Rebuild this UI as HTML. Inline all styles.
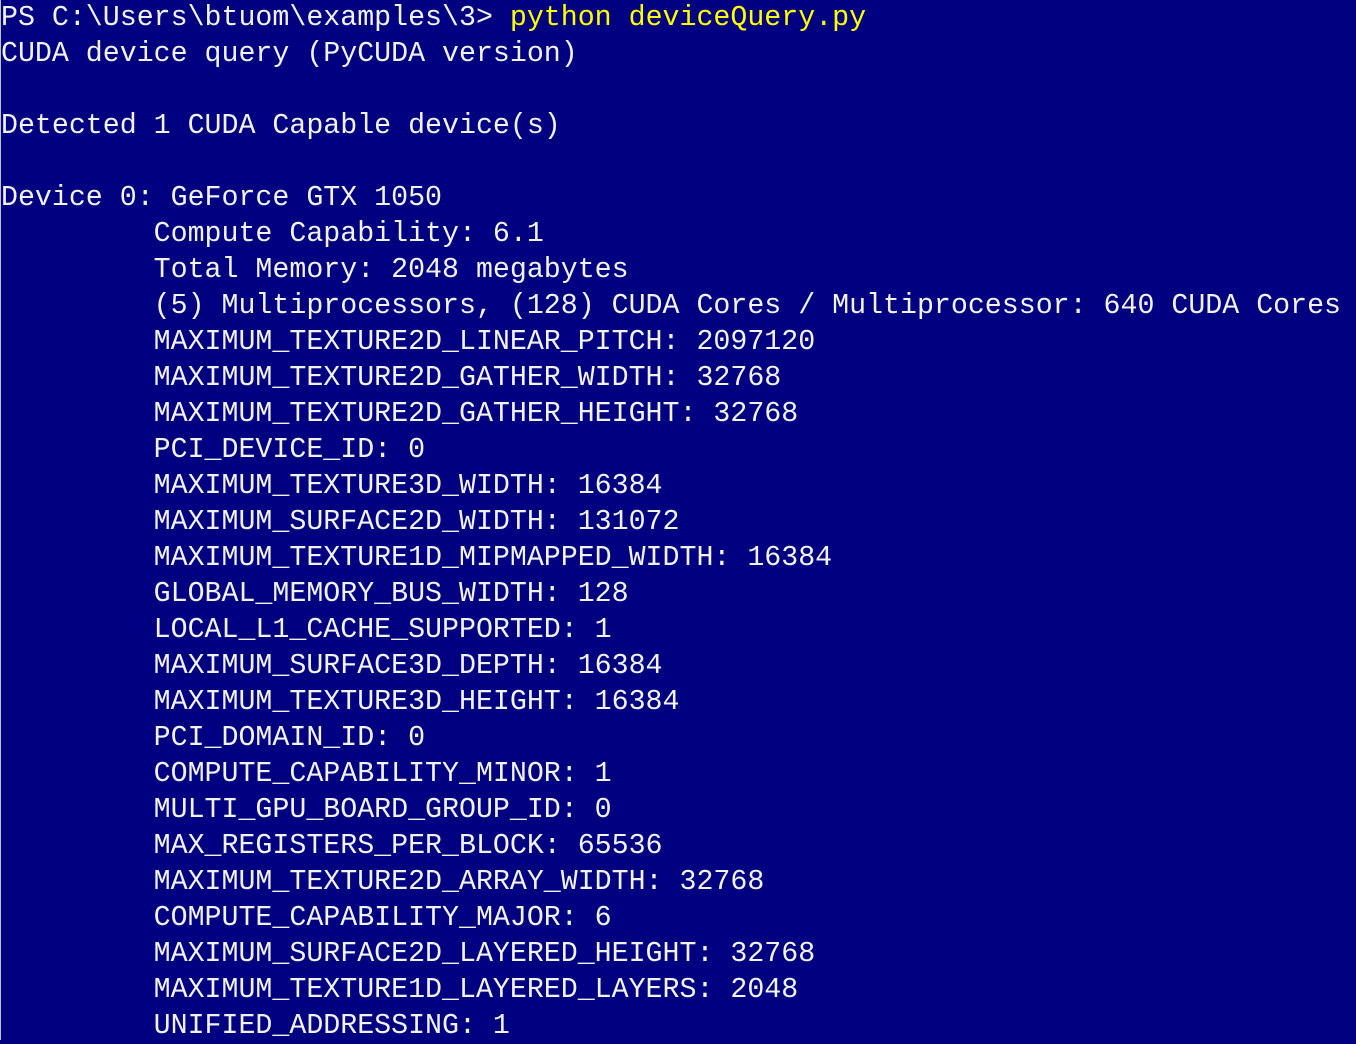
<!DOCTYPE html>
<html><head><meta charset="utf-8"><style>
html,body{margin:0;padding:0;}
body{width:1356px;height:1040px;background:#000080;overflow:hidden;position:relative;border-left:1px solid #c0c0c0;box-sizing:border-box;}
pre{position:absolute;left:0px;top:0px;margin:0;font-family:"Liberation Mono",monospace;font-size:28.28px;line-height:36px;color:#f2f2f2;white-space:pre;}
.y{color:#ffff00;}
</style></head><body><pre>PS C:\Users\btuom\examples\3&gt; <span class="y">python deviceQuery.py</span>
CUDA device query (PyCUDA version)

Detected 1 CUDA Capable device(s)

Device 0: GeForce GTX 1050
         Compute Capability: 6.1
         Total Memory: 2048 megabytes
         (5) Multiprocessors, (128) CUDA Cores / Multiprocessor: 640 CUDA Cores
         MAXIMUM_TEXTURE2D_LINEAR_PITCH: 2097120
         MAXIMUM_TEXTURE2D_GATHER_WIDTH: 32768
         MAXIMUM_TEXTURE2D_GATHER_HEIGHT: 32768
         PCI_DEVICE_ID: 0
         MAXIMUM_TEXTURE3D_WIDTH: 16384
         MAXIMUM_SURFACE2D_WIDTH: 131072
         MAXIMUM_TEXTURE1D_MIPMAPPED_WIDTH: 16384
         GLOBAL_MEMORY_BUS_WIDTH: 128
         LOCAL_L1_CACHE_SUPPORTED: 1
         MAXIMUM_SURFACE3D_DEPTH: 16384
         MAXIMUM_TEXTURE3D_HEIGHT: 16384
         PCI_DOMAIN_ID: 0
         COMPUTE_CAPABILITY_MINOR: 1
         MULTI_GPU_BOARD_GROUP_ID: 0
         MAX_REGISTERS_PER_BLOCK: 65536
         MAXIMUM_TEXTURE2D_ARRAY_WIDTH: 32768
         COMPUTE_CAPABILITY_MAJOR: 6
         MAXIMUM_SURFACE2D_LAYERED_HEIGHT: 32768
         MAXIMUM_TEXTURE1D_LAYERED_LAYERS: 2048
         UNIFIED_ADDRESSING: 1</pre></body></html>
